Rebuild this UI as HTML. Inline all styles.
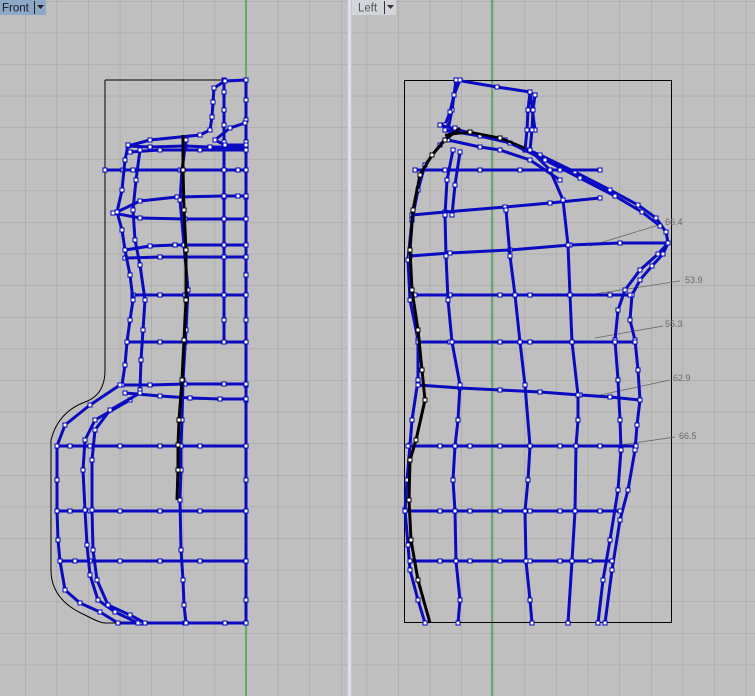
<!DOCTYPE html>
<html><head><meta charset="utf-8"><style>
html,body{margin:0;padding:0;background:#bfbfbf;width:755px;height:696px;overflow:hidden}
svg{display:block}
text{font-family:"Liberation Sans",sans-serif}
</style></head><body>
<svg width="755" height="696" viewBox="0 0 755 696" xmlns="http://www.w3.org/2000/svg">
<defs>
<marker id="m" markerWidth="6" markerHeight="6" refX="3" refY="3" markerUnits="userSpaceOnUse"><rect x="1" y="1" width="4" height="4" fill="#fff" stroke="#0000c0" stroke-width="1"/></marker>
<marker id="k" markerWidth="6" markerHeight="6" refX="3" refY="3" markerUnits="userSpaceOnUse"><rect x="1" y="1" width="4" height="4" fill="#fff" stroke="#000" stroke-width="1"/></marker>
<pattern id="g" width="31.6" height="31.6" patternUnits="userSpaceOnUse" x="25" y="1"><path d="M0 0H31.6M0 0V31.6" stroke="#a2a2a2" stroke-width="1" fill="none"/></pattern>
<pattern id="g2" width="31.6" height="31.6" patternUnits="userSpaceOnUse" x="366.6" y="1"><path d="M0 0H31.6M0 0V31.6" stroke="#a2a2a2" stroke-width="1" fill="none"/></pattern>
</defs>
<rect x="0" y="0" width="347" height="696" fill="url(#g)"/>
<rect x="352" y="0" width="403" height="696" fill="url(#g2)"/>
<rect x="347" y="0" width="5" height="696" fill="#c6c8cc"/>
<rect x="348.5" y="0" width="2" height="696" fill="#e6e9f0"/>
<line x1="246" y1="0" x2="246" y2="696" stroke="#4ca04c" stroke-width="1.5"/>
<line x1="492" y1="0" x2="492" y2="696" stroke="#4ca04c" stroke-width="1.5"/>

<path d="M105 80H246M105 80V370Q105 395 85 402Q58 412 51 440V570Q51 600 85 615Q100 623 105 623H246" fill="none" stroke="#000" stroke-width="1"/>
<g fill="none" stroke="#0a0ac0" stroke-width="3" stroke-linejoin="round" stroke-linecap="round" marker-mid="url(#m)" marker-start="url(#m)" marker-end="url(#m)">
<polyline points="246,80 246,100 246,120 246,142 246,170 246,197 246,219 246,245 246,257 246,275 246,295 246,320 246,342 246,385 246,400 246,446 246,480 246,511 246,561 246,600 246,623"/>
<polyline points="224,80 224,92 224,110 224,125 224,142 224,170 224,197 224,219 224,245 224,257 224,295 224,320 224,342"/>
<polyline points="246,80 225,81 214,88 213,102 212,117 210,130 200,135 150,140 128,146"/>
<polyline points="128,146 150,147 185,146 210,147 246,147"/>
<polyline points="130,152 160,150 200,150 246,150"/>
<polyline points="245,123 230,128 215,140 225,145 246,145"/>
<polyline points="105,170 123,170 133,170 180,170 224,170 238,170 246,170"/>
<polyline points="117,212 140,201 177,197 224,196 238,196 246,196"/>
<polyline points="113,213 140,218 185,219 224,219 246,219"/>
<polyline points="125,250 150,246 175,245 224,245 246,245"/>
<polyline points="125,258 160,257 224,257 246,257"/>
<polyline points="133,295 160,295 185,295 224,295 246,295"/>
<polyline points="127,342 160,342 185,342 224,342 246,342"/>
<polyline points="120,385 150,385 185,384 224,384 246,384"/>
<polyline points="125,393 160,396 190,398 220,399 246,399"/>
<polyline points="57,446 70,446 90,446 120,446 160,446 200,446 246,446"/>
<polyline points="57,511 70,511 90,511 120,511 160,511 200,511 246,511"/>
<polyline points="60,561 75,561 90,561 120,561 160,561 200,561 246,561"/>
<polyline points="118,623 140,623 185,623 225,623 246,623"/>
<polyline points="128,145 125,160 122,190 117,212 122,230 125,250 130,275 133,300 130,320 127,342 125,365 122,385"/>
<polyline points="140,150 136,180 133,210 135,240 140,265 145,300 143,330 141,360 140,390"/>
<polyline points="120,385 90,405 65,425 57,446 57,480 57,511 58,540 60,561 65,590 80,603 100,612 118,623"/>
<polyline points="130,400 95,420 85,440 83,470 85,510 87,545 90,575 98,600 115,612 138,623"/>
<polyline points="140,393 110,410 95,430 92,460 92,510 93,550 97,580 108,605 130,615 145,623"/>
<polyline points="186,140 182,170 180,200 184,245 188,290 186,330 183,380 182,420 181,446 181,470 180,500 181,550 183,580 184,605 186,623"/>
</g>
<polyline points="183,135 183,170 184,210 186,250 186,300 184,340 182,380 179,420 178,445 178,470 177,500" fill="none" stroke="#000" stroke-width="3" marker-mid="url(#k)"/>

<rect x="404.5" y="80.5" width="267" height="542" fill="none" stroke="#000" stroke-width="1"/>
<g stroke="#666" stroke-width="0.8">
<line x1="590" y1="246" x2="662" y2="224"/><line x1="588" y1="295" x2="680" y2="281"/>
<line x1="595" y1="338" x2="663" y2="326"/><line x1="600" y1="395" x2="670" y2="380"/>
<line x1="620" y1="445" x2="675" y2="437"/>
</g>
<g font-size="9" fill="#6a6a6a">
<text x="665" y="225">66.4</text><text x="685" y="283">53.9</text><text x="665" y="327">55.3</text>
<text x="673" y="381">62.9</text><text x="679" y="439">66.5</text>
</g>
<g fill="none" stroke="#0a0ac0" stroke-width="3" stroke-linejoin="round" stroke-linecap="round" marker-mid="url(#m)" marker-start="url(#m)" marker-end="url(#m)">
<polyline points="456,80 497,87 530,92 535,130"/>
<polyline points="460,80 454,95 452,110 448,130"/>
<polyline points="456,80 454,95 450,112 445,125"/>
<polyline points="530,92 528,110 527,130 525,150"/>
<polyline points="535,95 533,110 532,130 530,150"/>
<polyline points="440,125 470,133 505,140 540,155 575,172 610,190 638,205 656,218 666,232 668,243"/>
<polyline points="445,130 480,136 510,143 545,160 580,178 615,196 642,212 660,226"/>
<polyline points="448,140 480,147 500,150 530,160 560,180"/>
<polyline points="668,243 663,254 652,266 640,280 632,295 630,320 635,340 638,370 640,400 637,425 635,450 628,490 620,520 612,570 605,623"/>
<polyline points="668,243 658,254 640,270 625,290 618,310 615,340 618,380 620,420 621,450 618,490 610,540 603,580 598,623"/>
<polyline points="455,128 440,145 425,165 418,190 412,220 408,260 410,300 418,340 418,380 412,420 410,445 407,480 405,510 408,545 410,570 418,600 425,623"/>
<polyline points="415,170 445,170 480,170 520,170 560,170 600,170"/>
<polyline points="412,215 445,212 505,207 550,203 600,198"/>
<polyline points="410,256 450,253 510,250 570,245 620,243 668,243"/>
<polyline points="415,295 450,295 500,295 530,295 570,295 610,295 630,295"/>
<polyline points="418,342 450,342 500,342 530,342 572,342 615,342 635,342"/>
<polyline points="418,385 460,388 500,390 540,392 580,395 610,397 640,400"/>
<polyline points="408,446 440,446 470,446 500,446 530,446 560,446 600,446 636,446"/>
<polyline points="405,511 440,511 470,511 500,511 530,511 560,511 600,511 620,511"/>
<polyline points="410,561 440,561 470,561 500,561 530,561 560,561 590,561 612,561"/>
<polyline points="453,150 447,180 445,215 446,256 448,300 452,342 460,385 458,420 455,446 453,480 455,511 456,561 460,600 458,623"/>
<polyline points="460,152 455,185 452,215"/>
<polyline points="506,210 510,256 515,295 520,342 525,385 530,446 528,480 525,511 526,561 530,600 532,623"/>
<polyline points="530,150 550,170 563,200 568,245 570,295 572,342 578,395 578,420 576,446 575,511 572,561 568,623"/>
</g>
<polyline points="460,128 445,140 432,155 420,175 413,210 410,250 412,290 418,330 422,370 425,400 416,440 410,460 409,500 411,540 418,580 430,623" fill="none" stroke="#000" stroke-width="3" marker-mid="url(#k)"/>
<polyline points="445,135 470,132 500,138 525,148" fill="none" stroke="#000" stroke-width="2.5" marker-mid="url(#k)"/>

<rect x="0" y="0" width="46" height="15" fill="#8ea9c8"/>
<text x="2" y="11.5" font-size="11.5" fill="#1a1a1a">Front</text>
<line x1="34.5" y1="1" x2="34.5" y2="14" stroke="#222"/>
<path d="M37 5H44L40.5 9Z" fill="#222"/>
<rect x="352" y="0" width="44" height="15" fill="#d2d5da"/>
<text x="358" y="11.5" font-size="11.5" fill="#555">Left</text>
<line x1="384.5" y1="1" x2="384.5" y2="14" stroke="#333"/>
<path d="M387 5H394L390.5 9Z" fill="#333"/>
</svg>
</body></html>
